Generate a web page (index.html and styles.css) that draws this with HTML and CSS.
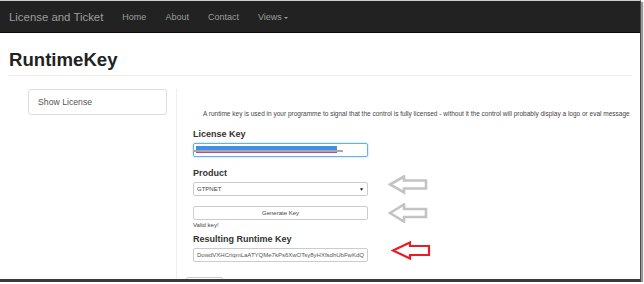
FILE: index.html
```html
<!DOCTYPE html>
<html lang="en">
<head>
    <meta charset="UTF-8">
    <title>RuntimeKey - License and Ticket</title>
    <link rel="stylesheet" href="styles.css">
</head>
<body>
    <div class="shot">
        <nav class="navbar">
            <span class="brand">License and Ticket</span>
            <ul class="nav">
                <li>Home</li>
                <li>About</li>
                <li>Contact</li>
                <li>Views<span class="caret"></span></li>
            </ul>
        </nav>

        <div class="page">
            <h1>RuntimeKey</h1>
            <hr>

            <div class="main">
                <aside class="side">
                    <div class="list-item">Show License</div>
                </aside>

                <section class="content">
                    <p class="lead">A runtime key is used in your programme to signal that the control is fully licensed - without it the control will probably display a logo or eval message</p>

                    <label class="label">License Key</label>
                    <div class="row">
                        <div class="field focus"><span class="sel"></span></div>
                    </div>

                    <label class="label">Product</label>
                    <div class="row">
                        <div class="field select"><span>GTPNET</span><span class="arrow">&#9660;</span></div>
                        <svg class="pointer up" width="40" height="20" viewBox="0 0 40 20">
                            <path d="M2 9.5 L16 1.5 L16 5.5 L38 5.5 L38 13.5 L16 13.5 L16 17.5 Z" fill="none" stroke="#c3c3c3" stroke-width="2.6" stroke-linejoin="miter"/>
                        </svg>
                    </div>

                    <div class="row gap">
                        <div class="field button">Generate Key</div>
                        <svg class="pointer" width="40" height="20" viewBox="0 0 40 20">
                            <path d="M2 10 L16 1.5 L16 6 L38 6 L38 14 L16 14 L16 18.5 Z" fill="none" stroke="#c3c3c3" stroke-width="2.6" stroke-linejoin="miter"/>
                        </svg>
                    </div>
                    <div class="help">Valid key!</div>

                    <label class="label small-gap">Resulting Runtime Key</label>
                    <div class="row">
                        <div class="field">DowdVXHCriqmLaATYQMe7kPs6XwOTsy8yHXfsdhUbFwKdQ</div>
                        <svg class="pointer red" width="40" height="20" viewBox="0 0 40 20">
                            <path d="M2 9.5 L19 1.5 L19 5 L38 5 L38 14 L19 14 L19 17.5 Z" fill="none" stroke="#ea1c24" stroke-width="2.2" stroke-linejoin="miter"/>
                        </svg>
                    </div>

                    <div class="next-btn"></div>
                </section>
            </div>
        </div>
    </div>
</body>
</html>
```

FILE: styles.css
```css
* {
    margin: 0;
    padding: 0;
    box-sizing: border-box;
}

body {
    font-family: "Liberation Sans", Arial, sans-serif;
    background: #fff;
    color: #333;
}

.shot {
    width: 641px;
    height: 282px;
    border-top: 1px solid #cfcfcf;
    border-right: 1px solid #4a4a4a;
    border-bottom: 3px solid #3a3a3a;
    box-shadow: 2px 2px 1px #9a9a9a;
    overflow: hidden;
}

/* navbar */
.navbar {
    height: 32px;
    background: #222;
    border-bottom: 1px solid #0a0a0a;
    display: flex;
    align-items: flex-start;
    gap: 19px;
    padding: 1px 0 0 9px;
    line-height: 30px;
    color: #9d9d9d;
}

.brand {
    font-size: 11.4px;
}

.nav {
    list-style: none;
    display: flex;
    gap: 19px;
    font-size: 9px;
}

.caret {
    display: inline-block;
    margin-left: 2px;
    vertical-align: middle;
    border-top: 2px solid #9d9d9d;
    border-left: 2px solid transparent;
    border-right: 2px solid transparent;
}

/* page */
.page {
    padding: 0 8px;
}

h1 {
    font-size: 18.6px;
    line-height: 22px;
    font-weight: bold;
    color: #222;
    margin: 16px 0 0 1px;
}

hr {
    border: 0;
    border-top: 1px solid #eee;
    margin-top: 4px;
}

.main {
    display: flex;
    margin-top: 13px;
    height: 220px;
}

.side {
    margin-left: 20px;
    width: 139px;
}

.list-item {
    height: 26px;
    border: 1px solid #ddd;
    border-radius: 3px;
    padding-left: 9px;
    font-size: 8.7px;
    line-height: 24px;
    color: #555;
}

.content {
    margin-left: 9px;
    border-left: 1px solid #eee;
    padding-left: 16px;
    flex: 1;
}

.lead {
    font-size: 6.5px;
    line-height: 9px;
    padding-left: 10px;
    margin-top: 20px;
    color: #444;
    white-space: nowrap;
}

.label {
    display: block;
    font-size: 9px;
    line-height: 11px;
    font-weight: bold;
    color: #333;
    margin-top: 11px;
    margin-bottom: 3px;
}

.label.small-gap {
    margin-top: 5px;
}

.row {
    display: flex;
    align-items: center;
    gap: 20px;
}

.row.gap {
    margin-top: 10px;
}

.field {
    width: 175px;
    height: 14px;
    border: 1px solid #ccc;
    border-radius: 2px;
    font-size: 6px;
    line-height: 12px;
    padding: 0 3px;
    color: #555;
    white-space: nowrap;
    overflow: hidden;
}

.field.focus {
    border-color: #66afe9;
    box-shadow: 0 0 2px rgba(102, 175, 233, 0.7);
    position: relative;
    overflow: visible;
    padding: 0 2px;
}

.sel {
    display: block;
    width: 141px;
    height: 7px;
    margin-top: 2px;
    background: #3f8fe8;
    border-bottom: 1px solid #b04a9a;
}

.sel::after {
    content: "";
    position: absolute;
    left: -1px;
    top: 6px;
    width: 150px;
    height: 1.5px;
    background: #a8a8a8;
}

.field.select {
    display: flex;
    justify-content: space-between;
    color: #444;
}

.arrow {
    font-size: 5px;
    color: #111;
}

.field.button {
    text-align: center;
    color: #444;
}

.pointer {
    margin: -3px 0;
    flex: none;
}

.pointer.up {
    position: relative;
    top: -4px;
}

.pointer.red {
    position: relative;
    top: -4px;
    left: 3px;
}

.help {
    font-size: 6px;
    line-height: 8px;
    margin-top: 1px;
    color: #444;
}

.next-btn {
    width: 37px;
    height: 12px;
    margin: 15px 0 0 -7px;
    border: 1px solid #ccc;
    border-radius: 2px;
}
```
